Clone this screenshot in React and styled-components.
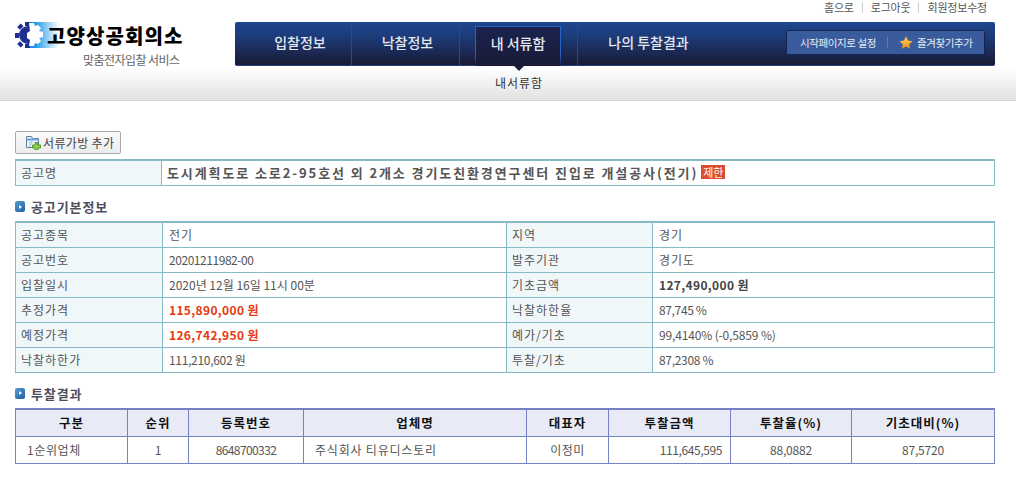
import styled, { createGlobalStyle } from "styled-components";

const Global = createGlobalStyle`
  html, body { margin: 0; padding: 0; background: #fff; overflow: hidden; }
  body { font-family: "Noto Sans CJK KR", "Noto Sans", sans-serif; font-size: 12px; color: #444; }
`;

const Page = styled.div`
  width: 1016px;
  height: 480px;
  overflow: hidden;
`;

const Header = styled.header`
  height: 100px;
  border-bottom: 1px solid #d4d4d4;
  background: linear-gradient(#fff 0, #fff 68px, #e6e7e7 94px, #e4e5e5 100px);
  display: grid;
  grid-template-columns: 235px 760px;
  grid-template-rows: 22px 44px 34px;
`;

const TopLinks = styled.div`
  grid-column: 2;
  display: flex;
  justify-content: flex-end;
  align-items: center;
  height: 15px;
  font-size: 11px;
  color: #555;
`;

const TopLink = styled.span`
  padding: 0 8px;
  line-height: 11px;
  letter-spacing: -0.2px;
  & + & { border-left: 1px solid #ccc; }
`;

const Logo = styled.div`
  grid-row: 1 / span 3;
  padding: 22px 0 0 15px;
  position: relative;
`;

const LogoMain = styled.div`
  display: flex;
  align-items: center;
  height: 27px;
`;

const LogoName = styled.span`
  font-size: 20px;
  font-weight: 900;
  color: #000;
  letter-spacing: 1.1px;
  margin-left: -13px;
  position: relative;
`;

const LogoSub = styled.div`
  margin: 3px 0 0 68px;
  font-size: 12px;
  color: #666;
  letter-spacing: -0.55px;
  line-height: 16px;
`;

const Nav = styled.nav`
  grid-column: 2;
  grid-row: 2;
  display: flex;
  align-items: stretch;
  height: 44px;
  border-radius: 2px;
  box-sizing: border-box;
  border-bottom: 1px solid #1d3f80;
  background: linear-gradient(#1e468e 0, #1c3d7c 30%, #1a1a36 100%);
`;

const NavItem = styled.div`
  position: relative;
  width: ${(p) => p.$w}px;
  box-sizing: border-box;
  display: flex;
  align-items: center;
  justify-content: center;
  padding: 0 0 3px ${(p) => p.$pad || 0}px;
  font-size: 14px;
  font-weight: 500;
  color: #e4e8f0;
  border-right: 1px solid ${(p) => (p.$line ? "#24498f" : "transparent")};
`;

const ActiveTab = styled.div`
  position: absolute;
  left: 15px;
  right: 16px;
  top: 4px;
  bottom: -1px;
  display: flex;
  align-items: center;
  justify-content: center;
  padding-bottom: 8px;
  border-style: solid;
  border-width: 1px 1px 0;
  border-image: linear-gradient(#2a62c4 70%, transparent) 1;
  background: linear-gradient(#1a2450, #1a1a36);
  &::after {
    content: "";
    position: absolute;
    left: 38px;
    bottom: -5px;
    border-left: 5px solid transparent;
    border-right: 5px solid transparent;
    border-top: 5px solid #1a1f40;
  }
`;

const NavTools = styled.div`
  margin: 8px 0 0 auto;
  margin-right: 10px;
  width: 199px;
  height: 25px;
  box-sizing: border-box;
  display: flex;
  align-items: center;
  background: #3a5c9c;
  border: 1px solid #17254e;
  border-radius: 2px;
  font-size: 10.5px;
  color: #e6ebf4;
  letter-spacing: -0.4px;
`;

const ToolText = styled.span`
  padding-left: ${(p) => p.$pad}px;
`;

const ToolLine = styled.i`
  width: 1px;
  height: 11px;
  margin-left: 11px;
  background: #5c7cb8;
`;

const SubNav = styled.div`
  grid-column: 2;
  grid-row: 3;
  padding: 8px 0 0 260px;
  font-size: 12px;
  color: #333;
  line-height: 18px;
  letter-spacing: 1px;
`;

const Content = styled.main`
  padding: 30px 21px 0 15px;
`;

const AddButton = styled.button`
  display: flex;
  align-items: center;
  gap: 2px;
  width: 106px;
  height: 23px;
  padding: 0 0 1px 9px;
  font: inherit;
  font-size: 12px;
  color: #444;
  background: linear-gradient(#fafafa, #ececec);
  border: 1px solid #a9a9a9;
  border-radius: 2px;
  letter-spacing: 0.35px;
`;

const Grid = styled.table`
  width: 979px;
  table-layout: fixed;
  border-collapse: collapse;
  margin-top: ${(p) => p.$top || 0}px;
  border-top: 2px solid ${(p) => p.$color};
  td, th {
    border: 1px solid ${(p) => p.$color};
    box-sizing: border-box;
    overflow: hidden;
    white-space: nowrap;
  }
`;

const Label = styled.td`
  background: #eff7f9;
  padding: 0 5px 1px;
  height: ${(p) => p.$h || 25}px;
  font-size: 12px;
  color: #555;
  letter-spacing: 1px;
`;

const Value = styled.td`
  padding: 0 6px 1px;
  font-size: 12px;
  color: #555;
  letter-spacing: ${(p) => p.$sp || 0}px;
`;

const Money = styled.span`
  color: ${(p) => (p.$red ? "#e8380d" : "#444")};
  font-weight: 700;
  letter-spacing: 0.35px;
`;

const Title = styled.td`
  padding: 0 5px 1px;
  font-size: 13px;
  font-weight: 700;
  color: #555;
  letter-spacing: 1.9px;
`;

const Badge = styled.span`
  display: inline-block;
  margin-left: 3px;
  width: 24px;
  text-align: center;
  height: 14px;
  line-height: 14px;
  font-size: 11px;
  font-weight: 400;
  letter-spacing: 0;
  color: #fff;
  background: #dd4b2f;
  vertical-align: 1px;
`;

const Section = styled.h3`
  display: flex;
  align-items: center;
  gap: 6px;
  margin: ${(p) => p.$top}px 0 0;
  height: 14px;
  font-size: 13px;
  font-weight: 700;
  color: #4e4e5e;
  letter-spacing: 0.9px;
`;

const Bullet = styled.span`
  width: 10px;
  height: 11px;
  border-radius: 2px;
  flex: none;
  background: linear-gradient(135deg, #5a9bd0, #1f5f9f);
  display: flex;
  align-items: center;
  justify-content: center;
  &::after {
    content: "";
    border-left: 3px solid #fff;
    border-top: 2.5px solid transparent;
    border-bottom: 2.5px solid transparent;
  }
`;

const HeadCell = styled.th`
  background: #e8ebf5;
  height: 27px;
  padding: 0 0 1px;
  font-size: 12.5px;
  font-weight: 700;
  color: #111;
  letter-spacing: 1px;
`;

const Cell = styled.td`
  height: 27px;
  padding: ${(p) => (p.$align === "left" ? "0 11px 1px" : p.$align === "right" ? "0 8px 1px" : "0 0 1px")};
  text-align: ${(p) => p.$align || "center"};
  font-size: 12px;
  color: #555;
  letter-spacing: ${(p) => p.$sp || 0}px;
`;

const GearLogo = () => (
  <svg width="45" height="27" viewBox="0 0 45 27">
    <defs>
      <linearGradient id="logoFade" x1="0" x2="1" y1="0" y2="0">
        <stop offset="0.2" stopColor="#1596e8" />
        <stop offset="1" stopColor="#ffffff" />
      </linearGradient>
    </defs>
    <rect x="13" y="0" width="31" height="26" fill="url(#logoFade)" />
    <circle cx="13" cy="13" r="9" fill="#1f2f8f" />
    <g fill="#1f2f8f">
      <rect x="10" y="0" width="5" height="4" />
      <rect x="10" y="22" width="5" height="4" />
      <rect x="0" y="11" width="4" height="5" />
      <rect x="3" y="3" width="5" height="4" transform="rotate(-45 5 5)" />
      <rect x="3" y="20" width="5" height="4" transform="rotate(45 5 22)" />
    </g>
    <path d="M14 1h5l1 3 3-1 3 3-2 3 4 1v5l-4 1 2 3-3 3-3-1-1 3h-5l1-6-3-2v-5l3-2z" fill="#fff" />
  </svg>
);

const FolderIcon = () => (
  <svg width="16" height="15" viewBox="0 0 16 15">
    <path d="M1.5 3.5V1.5h5l1 2h6v9h-12z" fill="#f2f5f8" stroke="#5d7ea3" />
    <rect x="1.5" y="3.5" width="12" height="2" fill="#6fa3d8" />
    <path d="M4 7h4M4 9h3M4 11h2" stroke="#9fb4c8" />
    <path d="M10 7.5h3v2.5h2.5v3H13v2h-3v-2H7.5v-3H10z" fill="#8fd13f" stroke="#2f7a18" strokeWidth="0.7" />
  </svg>
);

const StarIcon = () => (
  <svg width="14" height="13" viewBox="0 0 14 13" style={{ marginLeft: 11, marginRight: 4 }}>
    <defs>
      <linearGradient id="starFill" x1="0" x2="0" y1="0" y2="1">
        <stop offset="0" stopColor="#ffd75a" />
        <stop offset="1" stopColor="#f08a1c" />
      </linearGradient>
    </defs>
    <path d="M7 0.5l2 4.1 4.5.6-3.3 3.1.8 4.5L7 10.6l-4 2.2.8-4.5L.5 5.2 5 4.6z" fill="url(#starFill)" />
  </svg>
);

const infoRows = [
  ["공고종목", "전기", "지역", "경기", 1, 1],
  ["공고번호", "20201211982-00", "발주기관", "경기도", -0.45, 1],
  ["입찰일시", "2020년 12월 16일 11시 00분", "기초금액", <Money>127,490,000 원</Money>, 0, 0],
  ["추정가격", <Money $red>115,890,000 원</Money>, "낙찰하한율", "87,745 %", 0, -0.35],
  ["예정가격", <Money $red>126,742,950 원</Money>, "예가/기초", "99,4140% (-0,5859 %)", 0, -0.15],
  ["낙찰하한가", "111,210,602 원", "투찰/기초", "87,2308 %", -0.3, -0.3],
];

const resultCols = [112, 61, 115, 223, 82, 122, 121, 143];
const resultHead = ["구분", "순위", "등록번호", "업체명", "대표자", "투찰금액", "투찰율(%)", "기초대비(%)"];

export default function App() {
  return (
    <Page>
      <Global />
      <Header>
        <Logo>
          <LogoMain>
            <GearLogo />
            <LogoName>고양상공회의소</LogoName>
          </LogoMain>
          <LogoSub>맞춤전자입찰 서비스</LogoSub>
        </Logo>
        <TopLinks>
          <TopLink>홈으로</TopLink>
          <TopLink>로그아웃</TopLink>
          <TopLink>회원정보수정</TopLink>
        </TopLinks>
        <Nav>
          <NavItem $w={117} $line $pad={14}>입찰정보</NavItem>
          <NavItem $w={108} $line $pad={4}>낙찰정보</NavItem>
          <NavItem $w={118} $line>
            <ActiveTab>내 서류함</ActiveTab>
          </NavItem>
          <NavItem $w={130} $pad={12}>나의 투찰결과</NavItem>
          <NavTools>
            <ToolText $pad={13}>시작페이지로 설정</ToolText>
            <ToolLine />
            <StarIcon />
            <span>즐겨찾기추가</span>
          </NavTools>
        </Nav>
        <SubNav>내서류함</SubNav>
      </Header>
      <Content>
        <AddButton>
          <FolderIcon />
          <span>서류가방 추가</span>
        </AddButton>
        <Grid $color="#86bac7" $top={5}>
          <colgroup>
            <col width="146" />
            <col width="833" />
          </colgroup>
          <tbody>
            <tr>
              <Label $h={25}>공고명</Label>
              <Title>
                도시계획도로 소로2-95호선 외 2개소 경기도친환경연구센터 진입로 개설공사(전기)
                <Badge>제한</Badge>
              </Title>
            </tr>
          </tbody>
        </Grid>
        <Section $top={14}>
          <Bullet />
          공고기본정보
        </Section>
        <Grid $color="#86bac7" $top={7}>
          <colgroup>
            <col width="147" />
            <col width="344" />
            <col width="146" />
            <col width="342" />
          </colgroup>
          <tbody>
            {infoRows.map((r, i) => (
              <tr key={r[0]}>
                <Label $h={i === 0 ? 26 : 25}>{r[0]}</Label>
                <Value $sp={r[4]}>{r[1]}</Value>
                <Label>{r[2]}</Label>
                <Value $sp={r[5]}>{r[3]}</Value>
              </tr>
            ))}
          </tbody>
        </Grid>
        <Section $top={13}>
          <Bullet />
          투찰결과
        </Section>
        <Grid $color="#7682c4" $top={8}>
          <colgroup>
            {resultCols.map((w, i) => (
              <col key={i} width={w} />
            ))}
          </colgroup>
          <tbody>
            <tr>
              {resultHead.map((h) => (
                <HeadCell key={h}>{h}</HeadCell>
              ))}
            </tr>
            <tr>
              <Cell $align="left" $sp={0.6}>1순위업체</Cell>
              <Cell>1</Cell>
              <Cell $sp={-0.6}>8648700332</Cell>
              <Cell $align="left" $sp={0.8}>주식회사 티유디스토리</Cell>
              <Cell $sp={0.5}>이정미</Cell>
              <Cell $align="right" $sp={-0.4}>111,645,595</Cell>
              <Cell $sp={-0.15}>88,0882</Cell>
              <Cell $sp={-0.15}>87,5720</Cell>
            </tr>
          </tbody>
        </Grid>
        <Section $top={15}>
          <Bullet />
        </Section>
      </Content>
    </Page>
  );
}
